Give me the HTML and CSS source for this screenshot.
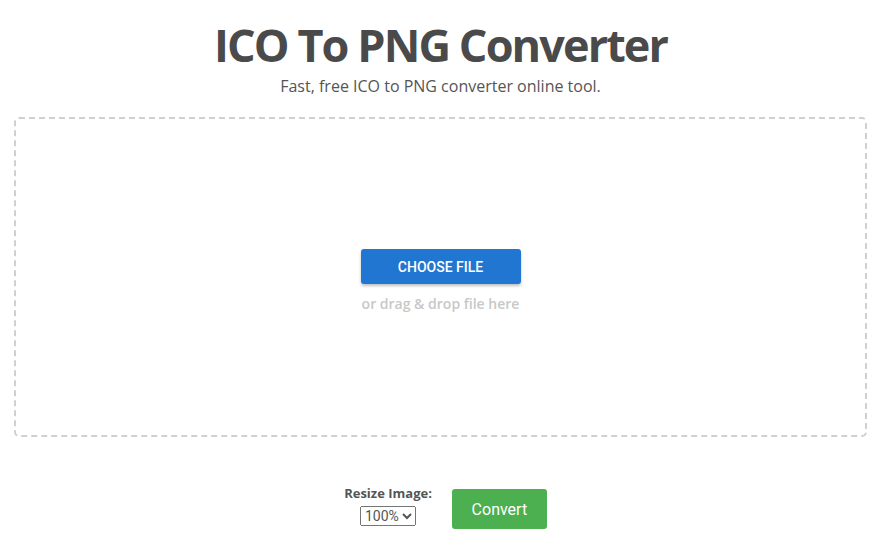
FILE: index.html
```html
<!DOCTYPE html>
<html lang="en">
<head>
    <meta charset="UTF-8">
    <meta name="viewport" content="width=device-width, initial-scale=1.0">
    <title>ICO To PNG Converter</title>
    <link rel="stylesheet" href="styles.css">
</head>
<body>
    <div class="page">
        <h1>ICO To PNG Converter</h1>
        <p class="subtitle">Fast, free ICO to PNG converter online tool.</p>

        <div class="dropzone">
            <button class="choose-btn">Choose File</button>
            <div class="drop-hint">or drag &amp; drop file here</div>
        </div>

        <div class="actions">
            <div class="resize">
                <label for="resize">Resize Image:</label>
                <select id="resize">
                    <option>100%</option>
                    <option>75%</option>
                    <option>50%</option>
                    <option>25%</option>
                </select>
            </div>
            <button class="convert-btn">Convert</button>
        </div>
    </div>
</body>
</html>
```

FILE: styles.css
```css
body {
    margin: 0;
    font-family: "Open Sans", Arial, sans-serif;
    background-color: #fff;
    color: #555;
}

.page {
    padding: 0 16px 0 14px;
    text-align: center;
}

h1 {
    margin: 0;
    padding-top: 15px;
    font-size: 45px;
    font-weight: 700;
    line-height: 60px;
    color: #4a4a4a;
    letter-spacing: -1.9px;
}

.subtitle {
    margin: 0;
    font-size: 16px;
    line-height: 22px;
    color: #555;
}

.dropzone {
    margin-top: 20px;
    height: 316px;
    border: 2px dashed #d0d0d0;
    border-radius: 5px;
    display: flex;
    flex-direction: column;
    align-items: center;
    justify-content: center;
}

.choose-btn {
    width: 160px;
    height: 35px;
    margin-top: 8px;
    border: none;
    border-radius: 3px;
    background-color: #2176d2;
    color: #fff;
    font-family: Roboto, Arial, sans-serif;
    font-size: 14px;
    font-weight: 500;
    text-transform: uppercase;
    box-shadow: 0 2px 3px rgba(0, 0, 0, 0.25);
    cursor: pointer;
}

.drop-hint {
    margin-top: 10px;
    font-size: 14px;
    font-weight: 600;
    color: #c8c8c8;
}

.actions {
    margin-top: 47px;
    display: flex;
    justify-content: center;
    align-items: flex-start;
    gap: 20px;
    padding-left: 10px;
}

.resize {
    display: flex;
    flex-direction: column;
    align-items: center;
    gap: 4px;
}

.resize label {
    font-size: 13px;
    line-height: 18px;
    font-weight: 700;
    color: #555;
}

.resize select {
    height: 20px;
    font-family: Roboto, Arial, sans-serif;
    font-size: 14px;
    color: #555;
}

.convert-btn {
    width: 95px;
    height: 40px;
    margin-top: 5px;
    border: none;
    border-radius: 3px;
    background-color: #4caf50;
    color: #fff;
    font-family: Roboto, Arial, sans-serif;
    font-size: 16px;
    cursor: pointer;
}
```
